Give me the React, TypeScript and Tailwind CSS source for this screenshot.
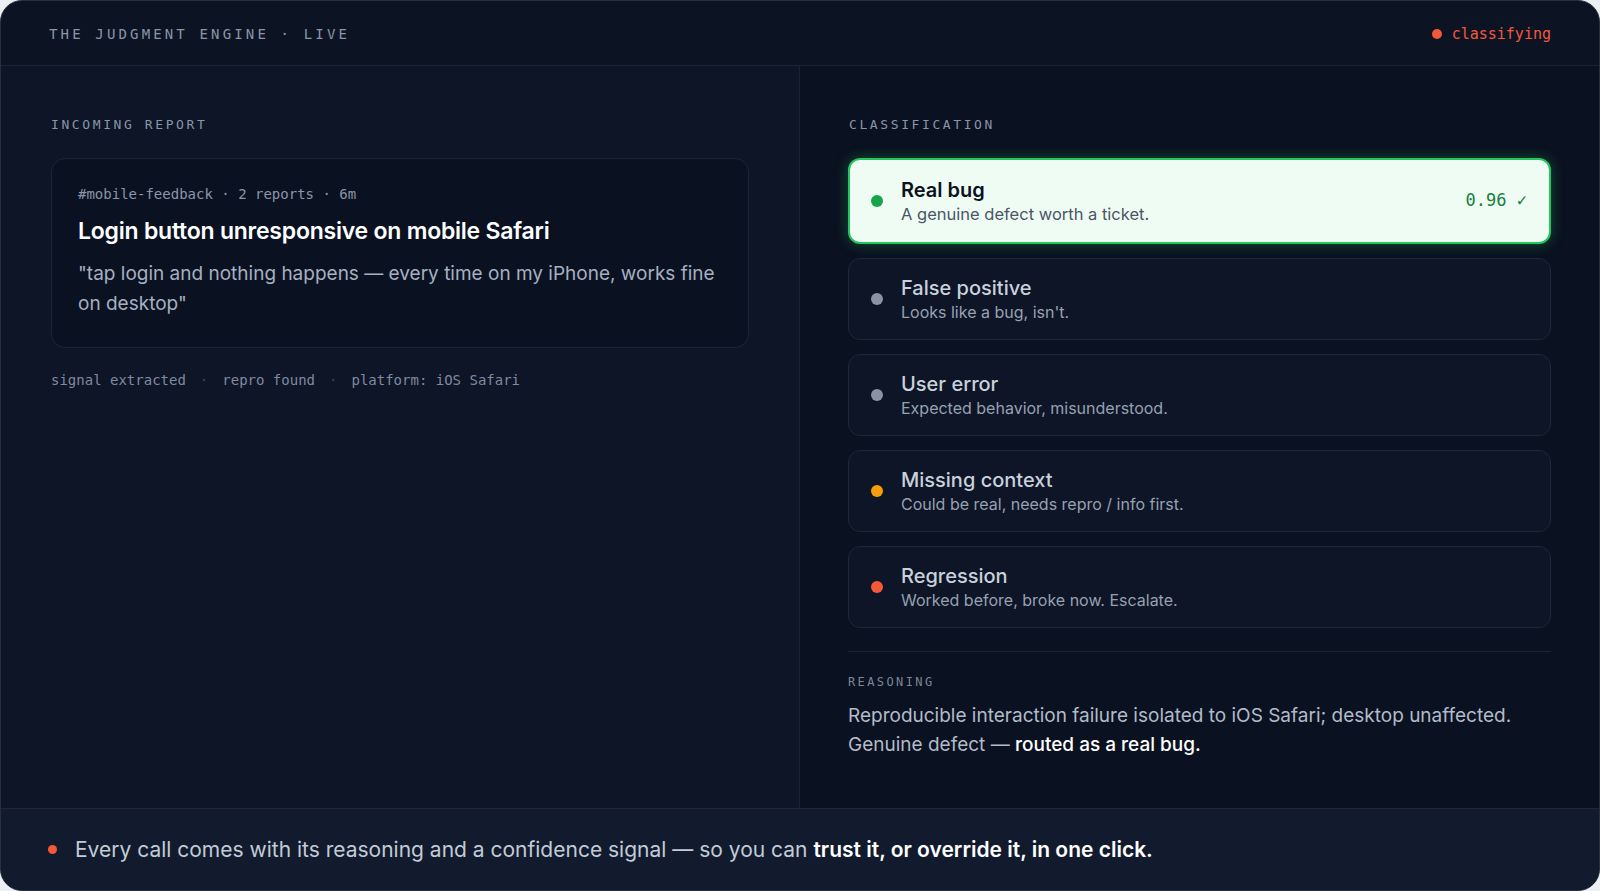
import React from "react";

const mono = { fontFamily: '"DejaVu Sans Mono", "Liberation Mono", monospace' };

interface Option {
  title: string;
  desc: string;
  dot: string;
}

const options: Option[] = [
  { title: "False positive", desc: "Looks like a bug, isn't.", dot: "bg-[#8a93a3]" },
  { title: "User error", desc: "Expected behavior, misunderstood.", dot: "bg-[#8a93a3]" },
  { title: "Missing context", desc: "Could be real, needs repro / info first.", dot: "bg-[#f59e0b]" },
  { title: "Regression", desc: "Worked before, broke now. Escalate.", dot: "bg-[#f4583a]" },
];

export default function App() {
  return (
    <div
      className="h-[891px] w-[1600px] bg-[#eceef1]"
      style={{ fontFamily: 'Inter, "Noto Sans", sans-serif' }}
    >
      <div className="flex h-full flex-col overflow-hidden rounded-[22px] border border-[#263042] bg-[#0c1424]">
        {/* Header */}
        <div className="flex h-[65px] shrink-0 items-center justify-between border-b border-[#1a2334] px-12">
          <span className="pt-[2px] text-[14px] tracking-[0.225em] text-[#8a95a8]" style={mono}>
            THE JUDGMENT ENGINE · LIVE
          </span>
          <span className="flex items-center gap-[10px] pt-[2px] text-[15px] text-[#f4583a]" style={mono}>
            <span className="h-[10px] w-[10px] rounded-full bg-[#f4583a]" />
            classifying
          </span>
        </div>

        {/* Body */}
        <div className="flex min-h-0 flex-1">
          {/* Left */}
          <div className="w-[799px] shrink-0 border-r border-[#1a2334] bg-[#0d1526] px-[50px] pt-[49px]">
            <div className="text-[13px] leading-[20px] tracking-[0.2em] text-[#8a95a8]" style={mono}>
              INCOMING REPORT
            </div>
            <div className="mt-[23px] rounded-[14px] border border-[#1c2536] bg-[#0a1222] pb-[28px] pl-[26px] pr-[32px] pt-[25px]">
              <div className="text-[14px] leading-[21px] text-[#8a95a8]" style={mono}>
                #mobile-feedback · 2 reports · 6m
              </div>
              <div className="mt-[10px] text-[23px] font-semibold leading-[32px] tracking-[-0.01em] text-white">
                Login button unresponsive on mobile Safari
              </div>
              <div className="mt-[12px] text-[19px] leading-[30px] text-[#a6b0c0]">
                "tap login and nothing happens — every time on my iPhone, works fine on desktop"
              </div>
            </div>
            <div
              className="mt-[22px] flex items-center gap-[14px] text-[14px] leading-[21px] text-[#8089a0]"
              style={mono}
            >
              <span>signal extracted</span>
              <span className="text-[#3a4458]">·</span>
              <span>repro found</span>
              <span className="text-[#3a4458]">·</span>
              <span>platform: iOS Safari</span>
            </div>
          </div>

          {/* Right */}
          <div className="flex-1 bg-[#0a1120] px-12 pt-[49px]">
            <div className="pl-[1px] text-[13px] leading-[20px] tracking-[0.2em] text-[#8a95a8]" style={mono}>
              CLASSIFICATION
            </div>
            <div className="mt-[23px] flex flex-col gap-[14px]">
              <div className="flex h-[86px] items-center rounded-[12px] border-2 border-[#22c55e] bg-[#effcf3] pl-[21px] pr-[22px] shadow-[0_0_14px_rgba(34,197,94,0.35)]">
                <span className="h-3 w-3 shrink-0 rounded-full bg-[#16a34a]" />
                <div className="ml-[18px] flex-1">
                  <div className="text-[20px] font-semibold leading-[26px] text-[#0b1220]">Real bug</div>
                  <div className="text-[16.5px] leading-[22px] text-[#4b5566]">A genuine defect worth a ticket.</div>
                </div>
                <span className="text-[17px] text-[#15803d]" style={mono}>
                  0.96 ✓
                </span>
              </div>
              {options.map((o) => (
                <div
                  key={o.title}
                  className="flex h-[82px] items-center rounded-[12px] border border-[#1f2838] bg-[#0d1526] pl-[22px] pr-[22px]"
                >
                  <span className={`h-3 w-3 shrink-0 rounded-full ${o.dot}`} />
                  <div className="ml-[18px] flex-1">
                    <div className="text-[20px] font-medium leading-[26px] text-[#c9d1dc]">{o.title}</div>
                    <div className="text-[16px] leading-[22px] text-[#97a1b2]">{o.desc}</div>
                  </div>
                </div>
              ))}
            </div>
            <div className="mt-[23px] border-t border-[#1c2536] pt-[21px]">
              <div className="text-[12px] leading-[18px] tracking-[0.2em] text-[#7c8699]" style={mono}>
                REASONING
              </div>
              <div className="mt-[10px] text-[19px] leading-[29px] text-[#b2bbc9]">
                Reproducible interaction failure isolated to iOS Safari; desktop unaffected. Genuine defect —{" "}
                <span className="font-medium text-white">routed as a real bug.</span>
              </div>
            </div>
          </div>
        </div>

        {/* Footer */}
        <div className="flex h-[82px] shrink-0 items-center border-t border-[#1e2839] bg-[#111b2d] pl-[47px]">
          <span className="h-[9px] w-[9px] rounded-full bg-[#f4583a]" />
          <span className="ml-[18px] text-[21px] text-[#c3cbd7]">
            Every call comes with its reasoning and a confidence signal — so you can{" "}
            <span className="font-semibold text-white">trust it, or override it, in one click.</span>
          </span>
        </div>
      </div>
    </div>
  );
}
